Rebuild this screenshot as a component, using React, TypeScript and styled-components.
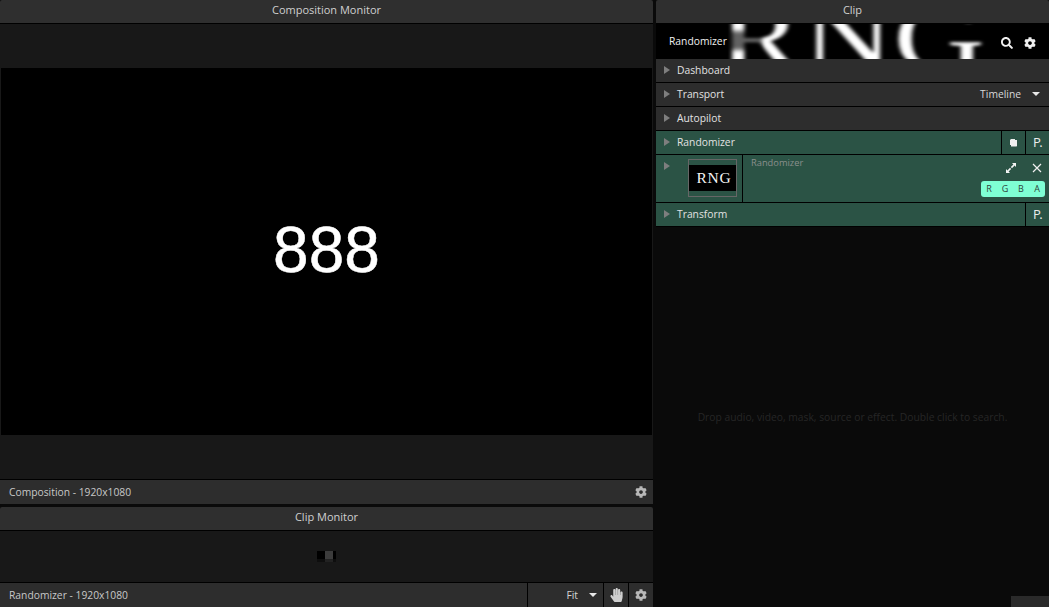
import { FC, ReactNode } from 'react';
import { FaCog, FaHandPaper, FaSearch } from 'react-icons/fa';
import styled, { createGlobalStyle } from 'styled-components';

const GlobalStyle = createGlobalStyle`
  html, body, #root {
    margin: 0;
    height: 100%;
    background: #0a0a0a;
  }
  body {
    overflow: hidden;
    font-family: 'Open Sans', 'Noto Sans', sans-serif;
    font-size: 10.3px;
    color: #d8d8d8;
  }
`;

const Page = styled.div`
  display: grid;
  grid-template-columns: 653px 393px;
  column-gap: 3px;
  width: 1049px;
  height: 607px;
  overflow: hidden;
`;

const Column = styled.div`
  display: flex;
  flex-direction: column;
  height: 607px;
`;

const PanelHeader = styled.div`
  flex: none;
  height: 23px;
  line-height: 20px;
  font-size: 11px;
  text-align: center;
  background: #2f2f2f;
  border-bottom: 1px solid #000;
  border-radius: 2px 2px 0 0;
  color: #d0d0d0;
`;

const MonitorBody = styled.div<{ $height: number }>`
  flex: none;
  height: ${(p) => p.$height}px;
  background: #181818;
  display: flex;
  flex-direction: column;
  justify-content: center;
  align-items: center;
  border-bottom: 1px solid #000;
`;

const Canvas = styled.div`
  width: 651px;
  height: 367px;
  background: #000;
  display: flex;
  align-items: center;
  justify-content: center;
  color: #fff;
  font-family: 'Liberation Sans', sans-serif;
  font-size: 64px;
  -webkit-text-stroke: 0.5px #fff;
`;

const Digits = styled.span`
  position: relative;
  top: -2px;
`;

const Footer = styled.div<{ $height: number; $gapBelow?: number }>`
  flex: none;
  height: ${(p) => p.$height}px;
  margin-bottom: ${(p) => p.$gapBelow ?? 0}px;
  display: flex;
  align-items: stretch;
  background: #2d2d2d;
  color: #c8c8c8;
`;

const FooterLabel = styled.div`
  flex: 1;
  padding: 0 0 1px 9px;
  display: flex;
  align-items: center;
`;

const FooterCell = styled.div<{ $width: number; $divided?: boolean }>`
  flex: none;
  box-sizing: border-box;
  width: ${(p) => p.$width}px;
  display: flex;
  align-items: center;
  justify-content: center;
  border-left: ${(p) => (p.$divided ? '1px solid #000' : 'none')};
  color: #b8b8b8;
  & > svg {
    width: 12px;
    height: 12px;
  }
`;

const FitCell = styled(FooterCell)`
  justify-content: flex-end;
  gap: 11px;
  padding-right: 6px;
  color: #d4d4d4;
`;

const HandCell = styled(FooterCell)`
  color: #cfcfcf;
  & > svg {
    width: 13px;
    height: 14px;
  }
`;

const Mosaic = styled.div`
  display: grid;
  grid-template-columns: 8px 8px 3px;
  grid-template-rows: 8px 3px;
`;

const MosaicCell = styled.div<{ $color: string }>`
  background: ${(p) => p.$color};
`;

const CaretDown = styled.span`
  width: 0;
  height: 0;
  border-left: 4.5px solid transparent;
  border-right: 4.5px solid transparent;
  border-top: 4.5px solid #e8e8e8;
`;

const Banner = styled.div`
  position: relative;
  flex: none;
  height: 35px;
  background: #000;
  overflow: hidden;
  display: flex;
  align-items: center;
  padding: 0 13px;
  gap: 11px;
  box-sizing: border-box;
`;

const BannerArt = styled.div`
  position: absolute;
  left: 62px;
  top: -33px;
  font-family: 'Liberation Serif', serif;
  font-size: 95px;
  line-height: 95px;
  color: #fff;
  filter: blur(1.4px);
  white-space: nowrap;
  transform: scaleX(1.33);
  transform-origin: left center;
`;

const BannerShade = styled.div`
  position: absolute;
  left: 72px;
  top: 7px;
  width: 34px;
  height: 19px;
  background: rgba(0, 0, 0, 0.62);
  filter: blur(2px);
`;

const BannerTitle = styled.div`
  position: relative;
  flex: 1;
  padding-bottom: 1px;
  color: #f0f0f0;
`;

const BannerIcon = styled.span`
  position: relative;
  display: flex;
  padding-top: 2px;
  color: #f0f0f0;
  & > svg {
    width: 12px;
    height: 12px;
  }
`;

const RowWrap = styled.div<{ $active?: boolean; $height?: number }>`
  flex: none;
  display: flex;
  align-items: stretch;
  height: ${(p) => p.$height ?? 23}px;
  background: ${(p) => (p.$active ? '#2b5345' : '#2d2d2d')};
  border-bottom: 1px solid #000;
`;

const Arrow = styled.span`
  flex: none;
  width: 0;
  height: 0;
  margin: 0 7px 0 8px;
  border-top: 4.5px solid transparent;
  border-bottom: 4.5px solid transparent;
  border-left: 6px solid #7e7e7e;
`;

const RowMain = styled.div`
  flex: 1;
  display: flex;
  align-items: center;
  color: #e2e2e2;
  padding-bottom: 2px;
`;

const RowLabel = styled.span`
  flex: 1;
`;

const RowAside = styled.span`
  display: flex;
  align-items: center;
  gap: 11px;
  padding-right: 9px;
  color: #d8d8d8;
`;

const RowButton = styled.div`
  flex: none;
  width: 23px;
  border-left: 1px solid #000;
  display: flex;
  align-items: center;
  justify-content: center;
  color: #ececec;
`;

const PresetMark = styled.span`
  font-size: 13px;
  letter-spacing: -1.5px;
  padding: 0 1px 2px 0;
`;

const EffectArrow = styled(Arrow)`
  margin-top: 7px;
`;

const ThumbCell = styled.div`
  flex: none;
  width: 66px;
  padding: 4px 0 0 11px;
  box-sizing: border-box;
  border-right: 1px solid #000;
`;

const Thumb = styled.div`
  width: 49px;
  height: 38px;
  box-sizing: border-box;
  border: 1px solid #666;
  display: flex;
  align-items: center;
`;

const ThumbInner = styled.div`
  flex: 1;
  height: 26px;
  padding-left: 3px;
  background: #000;
  color: #f4f4f4;
  font-family: 'Liberation Serif', serif;
  font-size: 15.5px;
  letter-spacing: 0.8px;
  line-height: 26px;
  text-align: center;
`;

const EffectBody = styled.div`
  flex: 1;
  padding: 1px 4px 0 8px;
  display: flex;
  justify-content: space-between;
`;

const EffectName = styled.div`
  font-size: 9.3px;
  line-height: 13px;
  color: #8a8f8c;
`;

const EffectControls = styled.div`
  display: flex;
  flex-direction: column;
  align-items: flex-end;
  padding-top: 7px;
  gap: 8px;
`;

const EffectIcons = styled.div`
  display: flex;
  align-items: center;
  gap: 16px;
  padding-right: 3px;
`;

const Channels = styled.div`
  display: grid;
  grid-template-columns: repeat(4, 16px);
  width: 64px;
  height: 16px;
  background: #7fffd4;
  border-radius: 3px;
  color: #2f3f39;
  font-size: 9px;
  line-height: 16px;
  text-align: center;
`;

const Hint = styled.div`
  flex: 1;
  display: flex;
  align-items: center;
  justify-content: center;
  color: #262626;
  position: relative;
`;

const CornerTab = styled.div`
  position: absolute;
  right: 0;
  bottom: 0;
  width: 38px;
  height: 11px;
  background: #2a2a2a;
`;

const CopyIcon: FC = () => (
  <svg width="9" height="9" viewBox="0 0 9 9">
    <path d="M1 2 L2 1 H6 V2 H8 V8 L7.5 8.5 H2 V7 H1 Z" fill="#efefef" />
  </svg>
);

const ExpandIcon: FC = () => (
  <svg width="10" height="10" viewBox="0 0 10 10">
    <path
      d="M6 0 H10 V4 L8.6 2.6 L6 5.2 L4.8 4 L7.4 1.4 Z M4 10 H0 V6 L1.4 7.4 L4 4.8 L5.2 6 L2.6 8.6 Z"
      fill="#f4f4f4"
    />
  </svg>
);

const CloseIcon: FC = () => (
  <svg width="10" height="10" viewBox="0 0 10 10">
    <path d="M1 1 L9 9 M9 1 L1 9" stroke="#f0f0f0" strokeWidth="1.2" />
  </svg>
);

type RowProps = { label: string; active?: boolean; aside?: ReactNode; children?: ReactNode };
const Row: FC<RowProps> = ({ label, active, aside, children }) => (
  <RowWrap $active={active}>
    <RowMain>
      <Arrow />
      <RowLabel>{label}</RowLabel>
      {aside}
    </RowMain>
    {children}
  </RowWrap>
);

const mosaic = ['#000', '#3c3c3c', '#000', '#0e0e0e', '#222', '#0e0e0e'];

export default function App() {
  return (
    <Page>
      <GlobalStyle />
      <Column>
        <PanelHeader>Composition Monitor</PanelHeader>
        <MonitorBody $height={455}>
          <Canvas>
            <Digits>888</Digits>
          </Canvas>
        </MonitorBody>
        <Footer $height={24} $gapBelow={3}>
          <FooterLabel>Composition - 1920x1080</FooterLabel>
          <FooterCell $width={25}>
            <FaCog />
          </FooterCell>
        </Footer>
        <PanelHeader>Clip Monitor</PanelHeader>
        <MonitorBody $height={51}>
          <Mosaic>
            {mosaic.map((color, i) => (
              <MosaicCell key={i} $color={color} />
            ))}
          </Mosaic>
        </MonitorBody>
        <Footer $height={24}>
          <FooterLabel>Randomizer - 1920x1080</FooterLabel>
          <FitCell $width={76} $divided>
            Fit
            <CaretDown />
          </FitCell>
          <HandCell $width={25} $divided>
            <FaHandPaper />
          </HandCell>
          <FooterCell $width={25} $divided>
            <FaCog />
          </FooterCell>
        </Footer>
      </Column>
      <Column>
        <PanelHeader>Clip</PanelHeader>
        <Banner>
          <BannerArt>RNG</BannerArt>
          <BannerShade />
          <BannerTitle>Randomizer</BannerTitle>
          <BannerIcon>
            <FaSearch />
          </BannerIcon>
          <BannerIcon>
            <FaCog />
          </BannerIcon>
        </Banner>
        <Row label="Dashboard" />
        <Row
          label="Transport"
          aside={
            <RowAside>
              Timeline
              <CaretDown />
            </RowAside>
          }
        />
        <Row label="Autopilot" />
        <Row label="Randomizer" active>
          <RowButton>
            <CopyIcon />
          </RowButton>
          <RowButton>
            <PresetMark>P.</PresetMark>
          </RowButton>
        </Row>
        <RowWrap $active $height={47}>
          <EffectArrow />
          <ThumbCell>
            <Thumb>
              <ThumbInner>RNG</ThumbInner>
            </Thumb>
          </ThumbCell>
          <EffectBody>
            <EffectName>Randomizer</EffectName>
            <EffectControls>
              <EffectIcons>
                <ExpandIcon />
                <CloseIcon />
              </EffectIcons>
              <Channels>
                <span>R</span>
                <span>G</span>
                <span>B</span>
                <span>A</span>
              </Channels>
            </EffectControls>
          </EffectBody>
        </RowWrap>
        <Row label="Transform" active>
          <RowButton>
            <PresetMark>P.</PresetMark>
          </RowButton>
        </Row>
        <Hint>
          Drop audio, video, mask, source or effect. Double click to search.
          <CornerTab />
        </Hint>
      </Column>
    </Page>
  );
}
